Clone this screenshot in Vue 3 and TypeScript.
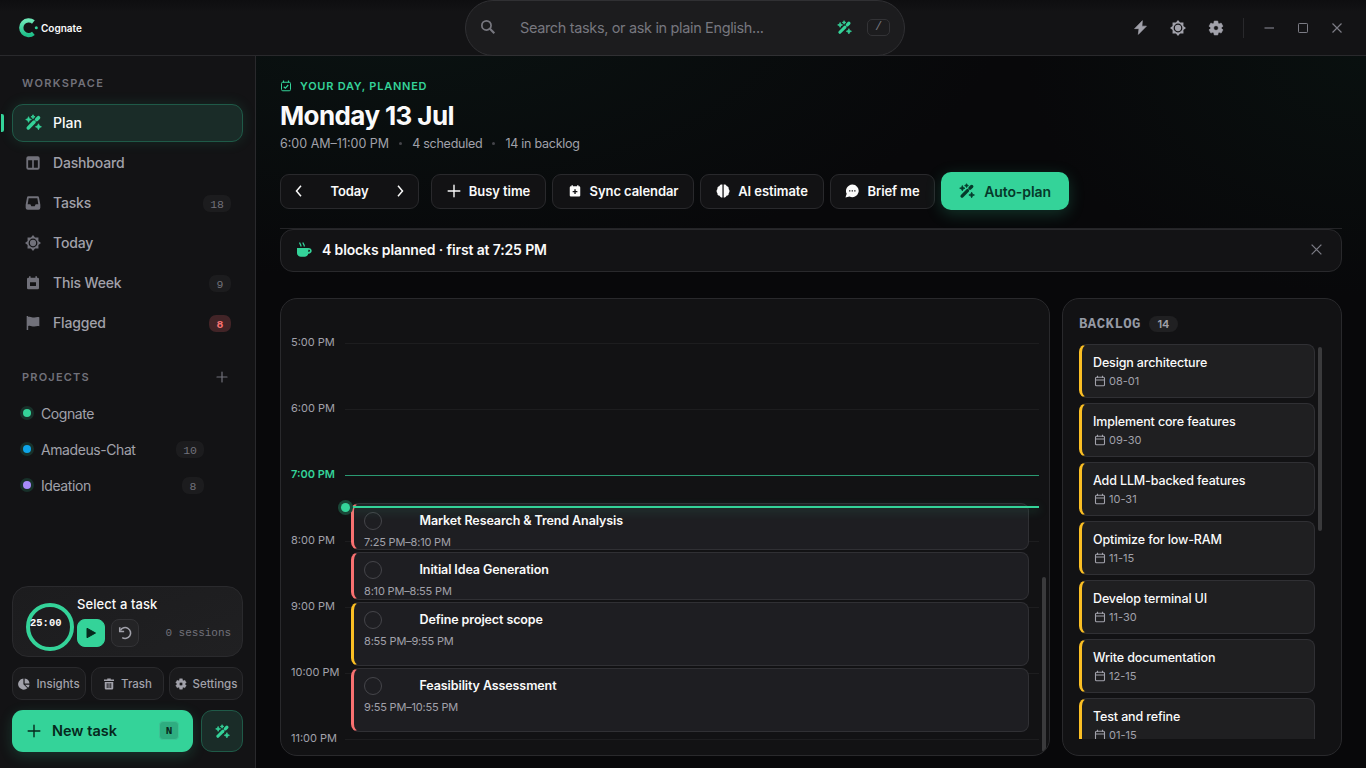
<script setup lang="ts">
import { defineComponent, h } from 'vue'

const wand =
  '<path d="M4.600 19.600 12.800 11.400" stroke="currentColor" stroke-width="5" stroke-linecap="round"/><path d="m16.500 7.700 2.500-2.500" stroke="currentColor" stroke-width="5.200" stroke-linecap="round"/><path d="M5 3.800 6.200 6.600 9 7.800 6.200 9 5 11.800 3.800 9 1 7.800 3.800 6.600ZM19 13.800l1.300 2.900 2.900 1.300-2.900 1.300-1.300 2.900-1.300-2.900-2.900-1.300 2.900-1.300ZM11.300 1l.9 2 2 .9-2 .9-.9 2-.9-2-2-.9 2-.9Z" fill="currentColor" stroke="currentColor" stroke-width="1.100" stroke-linejoin="round"/>'
const calBase =
  '<path d="M5 4h1V2h2.400v2h7.200V2H18v2h1a2 2 0 0 1 2 2v13.500a2 2 0 0 1-2 2H5a2 2 0 0 1-2-2V6a2 2 0 0 1 2-2Z'
const gear =
  '<path fill-rule="evenodd" d="m9.300 1.500-.5 3.200-1.700 1L4.300 4.500 1.500 9.300l2.400 1.900v1.700l-2.400 1.900 2.800 4.800 2.800-1.100 1.700 1 .5 3h5.400l.5-3 1.700-1 2.800 1.100 2.800-4.800-2.400-1.900v-1.700l2.400-1.900-2.800-4.800-2.800 1.200-1.700-1-.5-3.200ZM12 8.500a3.500 3.500 0 1 1 0 7 3.500 3.500 0 0 1 0-7Z" fill="currentColor" stroke="currentColor" stroke-width=".8" stroke-linejoin="round"/>'

const shapes: Record<string, string> = {
  wand,
  gear,
  board:
    '<path fill-rule="evenodd" d="M5 2h14a3 3 0 0 1 3 3v14a3 3 0 0 1-3 3H5a3 3 0 0 1-3-3V5a3 3 0 0 1 3-3ZM4.700 7.800v11.500h6.100V7.800Zm8.500 0v11.500h6.100V7.800Z" fill="currentColor"/>',
  inbox:
    '<path fill-rule="evenodd" d="M5 2h14a2 2 0 0 1 2 1.700l2 10.800V19a3 3 0 0 1-3 3H4a3 3 0 0 1-3-3v-4.500L3 3.700A2 2 0 0 1 5 2ZM5.500 5 4 14h4l1.500 2.800h5L16 14h4L18.500 5Z" fill="currentColor"/>',
  sun:
    '<path fill-rule="evenodd" d="m12 0 3.100 3.900 5.100-.1-.1 5.100L24 12l-3.900 3.100.1 5.100-5.100-.1L12 24l-3.100-3.900-5.100.1.100-5.100L0 12l3.900-3.100-.1-5.100 5.100.1ZM12 5.400a6.600 6.600 0 1 0 0 13.200 6.600 6.600 0 0 0 0-13.200Z" fill="currentColor"/><circle cx="12" cy="12" r="4.700" fill="currentColor"/>',
  week: calBase + 'M7.500 11v5.500h9V11Z" fill="currentColor" fill-rule="evenodd"/>',
  flag:
    '<path d="M2.500 1.500h2.300V3c3.500-1.500 6 1.300 9.200.7 2.800-.6 4.500-1.200 7.500-.5v13.500c-3-.8-5 .2-7.500.5-3.500.3-6-2.200-9.200-.7v6H2.500Z" fill="currentColor"/>',
  sync:
    calBase + 'M10.900 8.800v3H8v2.300h2.900v3h2.300v-3h2.900v-2.300h-2.900v-3Z" fill="currentColor" fill-rule="evenodd"/>',
  check:
    '<rect x="3" y="4.500" width="18" height="17" rx="2.500" fill="none" stroke="currentColor" stroke-width="2"/><path d="M7 1v4M17 1v4m-9.500 8.500 3.200 3 5.800-6.500" fill="none" stroke="currentColor" stroke-width="2.300"/>',
  date:
    '<rect x="3" y="4.500" width="18" height="17" rx="2" fill="none" stroke="currentColor" stroke-width="2.200"/><path d="M7 1.500v4M17 1.500v4M3 10h18" fill="none" stroke="currentColor" stroke-width="2.200"/>',
  brain:
    '<path d="M11 1v22C8.500 23.200 7 22 6.200 20 3.400 19.900 2 17.800 2.500 15.700c-2-1.700-2-5.100 0-7-.6-2.900 1-4.900 3.500-5.400C6.800 1.300 9 .6 11 1ZM13.200 1v22c2.500.2 4-1 4.800-3 2.800-.1 4.200-2.200 3.700-4.300 2-1.700 2-5.100 0-7 .6-2.900-1-4.900-3.500-5.400C17.400 1.300 15.200.6 13.200 1Z" fill="currentColor"/>',
  chat:
    '<path fill-rule="evenodd" d="M12.500 1a10.800 10.800 0 1 1-4.800 20.400L.8 23.200l2.100-6.300A10.800 10.800 0 0 1 12.500 1ZM7 10.500V13h2.200v-2.500Zm4.400 0V13h2.200v-2.500Zm4.400 0V13H18v-2.500Z" fill="currentColor"/>',
  bolt: '<path d="M15 1 2.500 13.800h7L8.500 23 21.500 9.800h-7.200Z" fill="currentColor" stroke="currentColor" stroke-linejoin="round"/>',
  search:
    '<circle cx="9.700" cy="9.700" r="6.900" fill="none" stroke="currentColor" stroke-width="2.600"/><path d="m14.800 14.800 6.700 6.700" stroke="currentColor" stroke-width="3.200"/>',
  plus: '<path d="M12 2v20M2 12h20" stroke="currentColor" stroke-width="2.400" stroke-linecap="round"/>',
  left: '<path d="m16 1.500-9 10.500 9 10.500" fill="none" stroke="currentColor" stroke-width="3"/>',
  right: '<path d="m8 1.500 9 10.500-9 10.500" fill="none" stroke="currentColor" stroke-width="3"/>',
  cup:
    '<path fill-rule="evenodd" d="M1.500 9h16.900c3.300 0 5.100 1.700 5.100 4.200s-2 4.400-5.100 4.300c-.9 3-2.700 4.500-5.300 4.500H7.500c-3.700 0-6-2.500-6-6Zm17 2.500v3.500c1.600.1 2.500-.6 2.500-1.800s-.9-1.800-2.500-1.700Z" fill="currentColor"/><path d="M5.500.8c0 2.400 2 2.400 2 6M10.500.8c0 2.400 2 2.400 2 6" stroke="currentColor" stroke-width="1.900" fill="none"/>',
  close: '<path d="m3 3 18 18M21 3 3 21" stroke="currentColor" stroke-width="2.400"/>',
  min: '<path d="M3 12h19" stroke="currentColor" stroke-width="2.400"/>',
  max: '<rect x="3" y="3" width="18" height="18" rx="1.500" fill="none" stroke="currentColor" stroke-width="2"/>',
  play: '<path d="M4 2.500v19L21 12Z" fill="currentColor" stroke="currentColor" stroke-width="2" stroke-linejoin="round"/>',
  reset:
    '<path d="M4.200 7.500a9.300 9.300 0 1 1 3 12.300" fill="none" stroke="currentColor" stroke-width="2.700"/><path d="M3 2v7.500h7.500" fill="none" stroke="currentColor" stroke-width="2.700"/>',
  pie:
    '<path d="M10.800 1.200v11.300l8 8A11.100 11.100 0 1 1 10.800 1.200ZM13.300 1a11 11 0 0 1 9.800 9.800h-9.800ZM14.200 13.300h8.900a10.500 10.500 0 0 1-2.900 6.100Z" fill="currentColor"/>',
  trash:
    '<path fill-rule="evenodd" d="M8.500 1h7v2H22v3.200H2V3h6.500ZM3.500 8h17v12.500A2.500 2.500 0 0 1 18 23H6a2.500 2.500 0 0 1-2.500-2.500Zm3.900 2.500V20h1.900v-9.500Zm3.600 0V20h1.900v-9.500Zm3.600 0V20h1.900v-9.500Z" fill="currentColor"/>',
}

const Icon = defineComponent({
  props: { name: { type: String, required: true }, size: { type: Number, default: 16 } },
  setup: (p) => () =>
    h('svg', { viewBox: '0 0 24 24', width: p.size, height: p.size, fill: 'none', innerHTML: shapes[p.name] }),
})

interface NavItem { label: string; icon: string; count?: number; hot?: boolean; active?: boolean }
const nav: NavItem[] = [
  { label: 'Plan', icon: 'wand', active: true },
  { label: 'Dashboard', icon: 'board' },
  { label: 'Tasks', icon: 'inbox', count: 18 },
  { label: 'Today', icon: 'sun' },
  { label: 'This Week', icon: 'week', count: 9 },
  { label: 'Flagged', icon: 'flag', count: 8, hot: true },
]
const projects = [
  { name: 'Cognate', tone: 'green', count: 0 },
  { name: 'Amadeus-Chat', tone: 'blue', count: 10 },
  { name: 'Ideation', tone: 'violet', count: 8 },
]
const footer = [
  { label: 'Insights', icon: 'pie' },
  { label: 'Trash', icon: 'trash' },
  { label: 'Settings', icon: 'gear' },
]
const actions = [
  { label: 'Busy time', icon: 'plus', cls: 'busy' },
  { label: 'Sync calendar', icon: 'sync', cls: 'sync' },
  { label: 'AI estimate', icon: 'brain', cls: 'ai' },
  { label: 'Brief me', icon: 'chat', cls: 'brief' },
]
const hours = ['5:00 PM', '6:00 PM', '7:00 PM', '8:00 PM', '9:00 PM', '10:00 PM', '11:00 PM']
const events = [
  { title: 'Market Research & Trend Analysis', time: '7:25 PM–8:10 PM', top: 204, height: 47, tone: 'red' },
  { title: 'Initial Idea Generation', time: '8:10 PM–8:55 PM', top: 253, height: 48, tone: 'red' },
  { title: 'Define project scope', time: '8:55 PM–9:55 PM', top: 303, height: 64, tone: 'amber' },
  { title: 'Feasibility Assessment', time: '9:55 PM–10:55 PM', top: 369, height: 64, tone: 'red' },
]
const backlog = [
  ['Design architecture', '08-01'],
  ['Implement core features', '09-30'],
  ['Add LLM-backed features', '10-31'],
  ['Optimize for low-RAM', '11-15'],
  ['Develop terminal UI', '11-30'],
  ['Write documentation', '12-15'],
  ['Test and refine', '01-15'],
]
</script>

<template>
  <div class="app">
    <header class="topbar">
      <div class="brand">
        <svg class="logo" viewBox="0 0 20 20" width="20" height="20">
          <defs>
            <linearGradient id="lg" x1="0" y1="0" x2="0" y2="1">
              <stop offset="0" stop-color="#6ee7b7" /><stop offset="1" stop-color="#1fc08a" />
            </linearGradient>
          </defs>
          <path d="M14.400 4A7.400 7.400 0 1 0 14.400 15.400" fill="none" stroke="url(#lg)" stroke-width="4.300" />
          <circle cx="17.300" cy="9.800" r="1.500" fill="#34d399" />
        </svg>
        <span>Cognate</span>
      </div>
      <div class="search">
        <Icon name="search" :size="16" />
        <span class="ph">Search tasks, or ask in plain English...</span>
        <Icon class="accent" name="wand" :size="15" />
        <kbd>/</kbd>
      </div>
      <div class="tools">
        <Icon name="bolt" :size="15" />
        <Icon name="sun" :size="16" />
        <Icon name="gear" :size="16" />
        <i class="sep"></i>
        <Icon class="win" name="min" :size="12" />
        <Icon class="win" name="max" :size="12" />
        <Icon class="win" name="close" :size="12" />
      </div>
    </header>

    <div class="body">
      <aside class="side">
        <div class="heading ws">WORKSPACE</div>
        <nav>
          <div v-for="n in nav" :key="n.label" class="item" :class="{ active: n.active }">
            <Icon :name="n.icon" :size="n.active ? 17 : 16" />
            <span>{{ n.label }}</span>
            <b v-if="n.count" class="badge" :class="{ hot: n.hot }">{{ n.count }}</b>
          </div>
        </nav>
        <div class="heading pj"><span>PROJECTS</span><Icon name="plus" :size="12" /></div>
        <div v-for="p in projects" :key="p.name" class="project">
          <i class="dot" :class="p.tone"></i>
          <span>{{ p.name }}</span>
          <b v-if="p.count" class="badge">{{ p.count }}</b>
        </div>

        <div class="timer">
          <div class="ring"><span>25:00</span></div>
          <div class="tmain">
            <div class="tname">Select a task</div>
            <div class="trow">
              <span class="sq go"><Icon name="play" :size="12" /></span>
              <span class="sq"><Icon name="reset" :size="14" /></span>
              <span class="sess">0 sessions</span>
            </div>
          </div>
        </div>
        <div class="mini">
          <span v-for="f in footer" :key="f.label"><Icon :name="f.icon" :size="12" />{{ f.label }}</span>
        </div>
        <div class="create">
          <div class="new"><Icon name="plus" :size="14" /><span>New task</span><kbd>N</kbd></div>
          <div class="magic"><Icon name="wand" :size="15" /></div>
        </div>
      </aside>

      <main class="main">
        <div class="eyebrow"><Icon name="check" :size="12" /><span>YOUR DAY, PLANNED</span></div>
        <h1>Monday 13 Jul</h1>
        <div class="meta">
          <span>6:00 AM–11:00 PM</span><i></i><span class="m2">4 scheduled</span><i></i><span class="m3">14 in backlog</span>
        </div>
        <div class="toolbar">
          <div class="btn daynav"><Icon name="left" :size="12" /><span>Today</span><Icon name="right" :size="12" /></div>
          <div v-for="a in actions" :key="a.label" class="btn" :class="a.cls">
            <Icon :name="a.icon" :size="14" /><span>{{ a.label }}</span>
          </div>
          <div class="auto"><Icon name="wand" :size="16" /><span>Auto-plan</span></div>
        </div>
        <div class="banner">
          <Icon class="accent" name="cup" :size="16" />
          <span>4 blocks planned · first at 7:25 PM</span>
          <Icon class="x" name="close" :size="13" />
        </div>

        <div class="panels">
          <section class="card timeline">
            <div v-for="t in hours" :key="t" class="hour" :class="{ cur: t === '7:00 PM' }">
              <span>{{ t }}</span><i></i>
            </div>
            <article
              v-for="e in events" :key="e.title" class="event" :class="e.tone"
              :style="{ top: e.top + 'px', height: e.height + 'px' }"
            >
              <div class="etop"><i></i><span>{{ e.title }}</span></div>
              <small>{{ e.time }}</small>
            </article>
            <div class="now"></div>
            <div class="thumb"></div>
          </section>
          <section class="card backlog">
            <div class="bhead"><span>BACKLOG</span><b>14</b></div>
            <div class="list">
              <div v-for="b in backlog" :key="b[0]" class="task">
                <div class="ttl">{{ b[0] }}</div>
                <div class="due"><Icon name="date" :size="12" />{{ b[1] }}</div>
              </div>
            </div>
            <div class="thumb"></div>
          </section>
        </div>
      </main>
    </div>
  </div>
</template>

<style>
body { background: #08080a; }
</style>
<style scoped>
* { box-sizing: border-box; }
.app {
  width: 1366px; height: 768px; overflow: hidden; display: flex; flex-direction: column;
  font-family: Inter, "Liberation Sans", sans-serif; color: #fafafa; background: #08080a; white-space: nowrap;
}
svg { display: block; flex: none; }
.accent { color: #34d399; }
.topbar {
  height: 56px; flex: none; display: grid; grid-template-columns: 465px 440px 1fr;
  background: linear-gradient(#0e0e10, #131315 12px); border-bottom: 1px solid #29292c;
}
.brand { display: flex; align-items: center; padding: 0 0 1px 19px; gap: 2px; font-size: 10px; font-weight: 600; letter-spacing: 0; }
.search {
  height: 56px; display: flex; align-items: center; padding: 0 14px 2px; border: 1px solid #303033;
  border-radius: 28px; background: #1c1c1e; color: #77777f; font-size: 14.500px; letter-spacing: -0.35px;
}
.search .ph { flex: 1; padding-left: 24px; }
.search kbd {
  margin-left: 15px; width: 23px; height: 17px; border: 1px solid #333336; border-radius: 5px;
  font: 12px/15px "Liberation Mono", monospace; text-align: center;
}
.tools { display: flex; align-items: center; justify-content: flex-end; padding: 0 23px 1px 0; color: #a1a1aa; gap: 22px; }
.tools .sep { width: 1px; height: 20px; background: #29292c; margin: 0 -3px; }
.tools .win { color: #7c7c85; }

.body { flex: 1; display: flex; min-height: 0; }
.side {
  width: 256px; flex: none; padding: 0 12px 16px; display: flex; flex-direction: column;
  background: #131315; border-right: 1px solid #29292c;
}
.heading { padding: 0 10px; color: #71717a; font-size: 11px; font-weight: 600; letter-spacing: 1.350px; line-height: 14px; }
.ws { margin: 20px 0 14px; }
.pj { display: flex; justify-content: space-between; align-items: center; margin: 28px 0 11px; padding-right: 15px; letter-spacing: 1.200px; }
nav { display: flex; flex-direction: column; gap: 2px; }
.item {
  position: relative; height: 38px; display: flex; align-items: center; padding: 0 12px 1px; border: 1px solid transparent;
  border-radius: 11px; color: #71717a; font-size: 14px; font-weight: 500; letter-spacing: -0.170px;
}
.item span { margin-left: 12px; color: #a1a1aa; }
.item.active { background: #1a2c28; border-color: #1f5a48; color: #34d399; box-shadow: 0 0 14px #34d39922; letter-spacing: 0; }
.item.active span { color: #fafafa; margin-left: 11px; }
.item.active::before { content: ""; position: absolute; left: -12px; top: 9px; width: 3px; height: 18px; border-radius: 0 2px 2px 0; background: #34d399; }
.badge {
  margin-left: auto; min-width: 22px; height: 17px; padding: 1px 7px 0; border-radius: 7px; background: #1c1c1e; color: #71717a;
  font: 400 11.500px/17px "Liberation Mono", monospace; text-align: center; letter-spacing: 0;
}
.item .badge { margin: 1px -1px 0 auto; }
.badge.hot { background: #422427; color: #f87171; font-weight: 700; }
.project { height: 36px; display: flex; align-items: center; padding: 0 39px 0 11px; color: #a1a1aa; font-size: 14px; letter-spacing: -0.420px; }
.project .badge { margin-top: 1px; }
.dot { width: 8px; height: 8px; border-radius: 50%; margin-right: 10px; box-shadow: 0 0 0 3px #18312a; }
.green { background: #34d399; }
.blue { background: #0ea5e9; }
.violet { background: #a78bfa; }

.timer { margin-top: auto; height: 71px; border: 1px solid #2a2a2d; border-radius: 16px; background: linear-gradient(160deg, #1c1c1e, #202022); display: flex; padding: 0 11px 0 13px; }
.ring { width: 48px; height: 48px; margin-top: 16px; border: 4px solid #34d399; border-radius: 50%; font: 700 10.500px/32px "Liberation Mono", monospace; }
.tmain { flex: 1; margin-left: 3px; padding-top: 9px; }
.tname { font-size: 13px; font-weight: 500; line-height: 17px; letter-spacing: 0.080px; }
.trow { display: flex; align-items: center; margin-top: 6px; }
.sq { width: 28px; height: 28px; display: grid; place-items: center; border: 1px solid #333336; border-radius: 8px; background: #242426; color: #a1a1aa; margin-right: 6px; }
.sq.go { background: #34d399; border-color: #34d399; color: #06281c; }
.sess { margin-left: auto; font: 11px "Liberation Mono", monospace; color: #71717a; letter-spacing: -0.050px; }
.mini { display: grid; grid-template-columns: 74px 73px 74px; gap: 5px; margin-top: 10px; }
.mini span { height: 33px; display: flex; align-items: center; justify-content: center; gap: 6px; border: 1px solid #2a2a2d; border-radius: 10px; background: #1a1a1c; color: #a1a1aa; font-size: 11.500px; font-weight: 500; }
.create { display: flex; gap: 8px; margin-top: 10px; }
.new { width: 181px; height: 42px; display: flex; align-items: center; padding: 0 14px 1px 15px; border-radius: 11px; background: #34d399; color: #06281c; font-size: 14.500px; font-weight: 600; box-shadow: 0 4px 14px #34d39930; }
.new span { margin-left: 11px; }
.new kbd { margin-left: auto; width: 20px; height: 19px; border-radius: 4px; background: #2ead80; border: 1px solid #3ec194; font: 700 11px/18px "Liberation Mono", monospace; text-align: center; }
.magic { width: 42px; height: 42px; display: grid; place-items: center; border: 1px solid #1f5a48; border-radius: 11px; background: #1a2c28; color: #34d399; }

.main {
  flex: 1; min-width: 0; padding: 22px 24px 12px; display: flex; flex-direction: column;
  background: radial-gradient(ellipse 620px 280px at 12% -8%, #0a1312, transparent), radial-gradient(ellipse 340px 240px at 100% 0, #09100f, transparent), #08080a;
}
.eyebrow { display: flex; align-items: center; gap: 8px; height: 16px; color: #34d399; font-size: 11px; font-weight: 600; letter-spacing: 0.750px; }
h1 { margin: 5px 0 0; font-size: 26px; line-height: 34px; font-weight: 700; letter-spacing: -0.600px; }
.meta { display: flex; align-items: center; margin-top: 2px; height: 17px; color: #a1a1aa; font-size: 12.500px; }
.meta i { width: 3px; height: 3px; margin: 0 10px; border-radius: 50%; background: #45454a; }
.m2 { letter-spacing: -0.250px; }
.m3 { letter-spacing: -0.250px; }
.toolbar { display: flex; align-items: center; gap: 6px; height: 38px; margin-top: 20px; }
.btn { height: 35px; display: flex; align-items: center; justify-content: center; gap: 8px; border: 1px solid #29292c; border-radius: 9px; background: #121214; font-size: 13px; font-weight: 600; letter-spacing: -0.080px; }
.daynav { width: 139px; margin-right: 6px; gap: 25px; }
.busy { width: 115px; }
.sync { width: 142px; }
.ai { width: 124px; }
.brief { width: 105px; }
.auto { width: 128px; height: 38px; display: flex; align-items: center; justify-content: center; gap: 9px; border-radius: 10px; background: #34d399; color: #06382a; font-size: 14px; font-weight: 600; letter-spacing: -0.100px; box-shadow: 0 4px 16px #34d39938; }
.banner {
  position: relative; height: 43px; margin-top: 19px; display: flex; align-items: center; padding: 0 18px 2px 15px; gap: 10px;
  border: 1px solid #29292c; border-radius: 13px; background: #131315; font-size: 14px; font-weight: 600; letter-spacing: -0.140px;
}
.banner::before { content: ""; position: absolute; left: -1px; right: -1px; top: -2px; height: 1px; background: #242427; }
.banner .x { margin-left: auto; color: #7c7c85; }

.panels { display: grid; grid-template-columns: 770px 280px; gap: 12px; height: 458px; margin-top: 26px; }
.card { position: relative; overflow: hidden; border: 1px solid #29292c; border-radius: 17px; background: #121214; }
.timeline { padding: 33px 10px 0; }
.hour { height: 66px; display: flex; align-items: flex-start; font-size: 11px; line-height: 20px; color: #a1a1aa; }
.hour span { width: 54px; flex: none; }
.hour i { flex: 1; height: 1px; margin-top: 11px; background: #1d1d1f; }
.hour.cur { color: #34d399; font-weight: 600; }
.hour.cur i { background: #2a9a72; }
.event { position: absolute; left: 70px; width: 678px; padding: 8px 10px; overflow: hidden; border: 1px solid #303034; border-left: 3px solid #f87171; border-radius: 8px; background: #1e1e22; }
.event.amber { border-left-color: #fbbf24; }
.etop { display: flex; align-items: center; font-size: 12.500px; font-weight: 600; height: 18px; letter-spacing: -0.100px; }
.etop span { margin-top: -1px; }
.etop i { width: 18px; height: 18px; flex: none; border: 1px solid #45454a; border-radius: 50%; margin-right: 37.500px; }
.event small { display: block; margin-top: 4px; font-size: 11px; line-height: 17px; color: #a1a1aa; letter-spacing: -0.180px; }
.now { position: absolute; left: 64px; right: 10px; top: 207px; height: 2px; background: #34d399; box-shadow: 0 2px 10px #34d39960; }
.now::before { content: ""; position: absolute; left: -4px; top: -3px; width: 9px; height: 9px; border-radius: 50%; background: #34d399; box-shadow: 0 0 0 3px #1a4637; }
.thumb { position: absolute; width: 4px; border-radius: 2px; background: #3a3a3c; }
.timeline .thumb { right: 3px; top: 278px; height: 175px; }
.backlog { padding: 16px; }
.bhead { display: flex; align-items: center; height: 18px; gap: 8px; color: #a1a1aa; }
.bhead span { font: 700 14px/16px "Liberation Mono", monospace; letter-spacing: 0.450px; color: #9499a4; }
.bhead b { width: 29px; height: 16px; border-radius: 8px; background: #202022; font-size: 11px; line-height: 16px; font-weight: 600; text-align: center; }
.list { width: 236px; height: 395px; margin-top: 11px; overflow: hidden; }
.task { height: 54px; margin-bottom: 5px; padding: 9px 11px; border: 1px solid #303034; border-left: 3px solid #fbbf24; border-radius: 8px; background: #1f1f21; }
.ttl { font-size: 12.500px; line-height: 18px; font-weight: 500; letter-spacing: -0.140px; }
.due { display: flex; align-items: center; gap: 3px; padding-left: 1px; height: 18px; font-size: 11px; color: #a1a1aa; }
.backlog .thumb { right: 19px; top: 48px; height: 184px; }
</style>
